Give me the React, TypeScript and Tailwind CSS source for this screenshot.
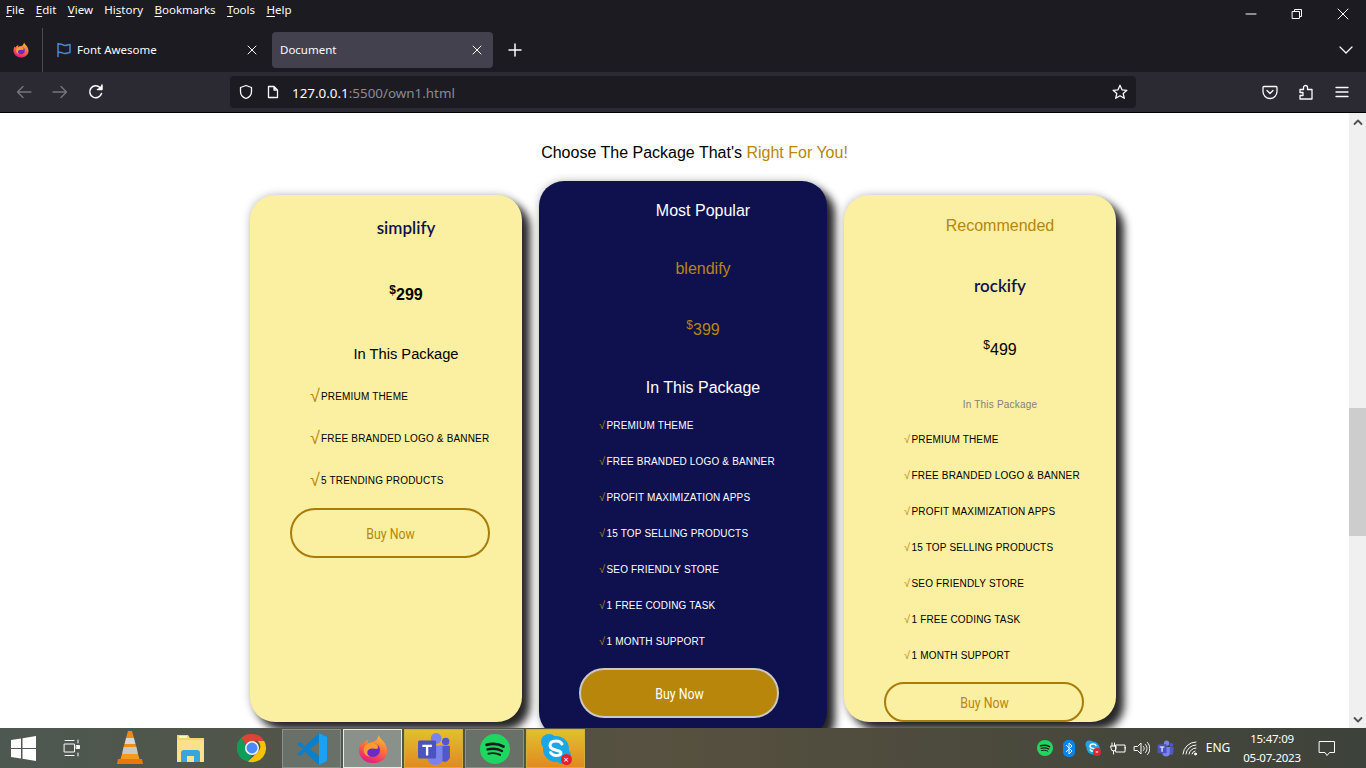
import React from "react";

const sans = "font-['Liberation_Sans',Arial,sans-serif]";
const ui = "font-['Noto_Sans','Open_Sans',sans-serif]";
const comic = "font-['Comic_Sans_MS','Lato','Noto_Sans',sans-serif]";
const narrow = "font-['Roboto',sans-serif]";

const Stroke = ({ s = 16, children, c = "#fbfbfe", w = 1.5, v = 16 }: { s?: number; children: React.ReactNode; c?: string; w?: number; v?: number }) => (
  <svg width={s} height={s} viewBox={`0 0 ${v} ${v}`} fill="none" stroke={c} strokeWidth={w} strokeLinecap="round" strokeLinejoin="round">
    {children}
  </svg>
);

const FirefoxIcon = ({ s = 16 }: { s?: number }) => (
  <svg width={s} height={s} viewBox="0 0 32 32">
    <defs>
      <linearGradient id={`ff${s}`} x1="0.7" y1="0" x2="0.3" y2="1">
        <stop offset="0" stopColor="#ffbd2e" />
        <stop offset="0.45" stopColor="#ff7139" />
        <stop offset="1" stopColor="#e31587" />
      </linearGradient>
    </defs>
    <path d="M22 1c1 3 4 5 6 8 2 3 3 6 3 9 0 8-7 13-15 13S1 25 1 17c0-3 1-6 2-8 .5 1 1 2 2 2 1-2 3-4 6-5-1 2-1 3 0 4 3-1 7-2 9-4 1-2 2-3 2-5z" fill={`url(#ff${s})`} />
    <circle cx="16" cy="17" r="7.5" fill="#6a2bc4" />
    <path d="M8 12c3-3 8-4 11-2 3 2 3 5 1 6-3-1-7-1-9 1-2 2-1 6 2 7-4 0-7-3-7-7 0-2 1-4 2-5z" fill="#ff9a30" />
  </svg>
);

const VsCode = () => (
  <svg width="32" height="34" viewBox="0 0 32 34">
    <path d="M23 1l8 4v24l-8 4L9 20l-5 4-3-2 6-5-6-5 3-2 5 4z" fill="#0a7fcb" />
    <path d="M23 1l8 4v24l-8 4z" fill="#1e9ff0" />
    <path d="M23 10l-9 7 9 7z" fill="#687068" />
  </svg>
);

const Teams = ({ s = 30 }: { s?: number }) => (
  <svg width={s} height={s} viewBox="0 0 32 32">
    <circle cx="18" cy="6" r="5" fill="#7b83eb" />
    <circle cx="27" cy="9" r="3.5" fill="#5059c9" />
    <path d="M22 13h9v10c0 3-3 5-5 5s-4-1-4-3z" fill="#5059c9" />
    <path d="M10 13h14v13c0 3-3 5-7 5s-7-3-7-6z" fill="#7b83eb" />
    <rect x="1" y="8" width="17" height="17" rx="1.5" fill="#4b53bc" />
    <path d="M5 12h9v2h-3.4v8H8.400v-8H5z" fill="#fff" />
  </svg>
);

const Spotify = ({ s = 30 }: { s?: number }) => (
  <svg width={s} height={s} viewBox="0 0 32 32">
    <circle cx="16" cy="16" r="16" fill="#1ed760" />
    <g fill="none" stroke="#1a1a1a" strokeLinecap="round">
      <path d="M7 11.500c6-1.500 13-1 18 1.800" strokeWidth="3" />
      <path d="M8 16.500c5-1.300 11-.8 15.500 1.600" strokeWidth="2.500" />
      <path d="M9 21c4.500-1 9-.6 12.500 1.300" strokeWidth="2" />
    </g>
  </svg>
);

const Skype = ({ s = 30, b = false }: { s?: number; b?: boolean }) => (
  <div className="relative" style={{ width: s, height: s }}>
    <svg width={s} height={s} viewBox="0 0 32 32">
      <circle cx="9" cy="9" r="8" fill="#19a7e6" />
      <circle cx="23" cy="23" r="8" fill="#19a7e6" />
      <circle cx="16" cy="16" r="13" fill="#19a7e6" />
      <path d="M22 11c-1-2-3-3-6-3-4 0-6 2-6 4.500 0 6 11 3.500 11 7.500 0 1.500-2 2.500-5 2.500-3 0-4.500-1.500-5.500-3" fill="none" stroke="#fff" strokeWidth="3" strokeLinecap="round" />
    </svg>
    <div className={`absolute bottom-0 right-0 flex items-center justify-center rounded-full bg-[#e3222e] text-white leading-none ${b ? "h-[8px] w-[8px] text-[6px]" : "h-[11px] w-[11px] text-[9px]"}`}>×</div>
  </div>
);

const Vlc = () => (
  <svg width="26" height="34" viewBox="0 0 26 34">
    <path d="M11 0h4l2 7H9z" fill="#f08a12" />
    <path d="M9 7h8l1.500 6h-11z" fill="#d7d7d7" />
    <path d="M7.500 13h11l1 3H6.500z" fill="#f28c14" />
    <path d="M6.500 16h13l1.500 7H5z" fill="#c9c9c9" />
    <path d="M5 23h16l1.500 5h-19z" fill="#f59a1c" />
    <path d="M1 28h24l1 5H0z" fill="#e9780c" />
  </svg>
);

const Folder = () => (
  <svg width="29" height="28" viewBox="0 0 29 28">
    <path d="M1 1h11l2 3h14v23a1 1 0 0 1-1 1H1z" fill="#f5d570" />
    <path d="M1 6h27v21a1 1 0 0 1-1 1H1z" fill="#fde08c" />
    <rect x="3" y="2" width="8" height="2" fill="#fff3c8" />
    <path d="M5 28v-9a3 3 0 0 1 3-3h13a3 3 0 0 1 3 3v9h-6v-6h-7v6z" fill="#3aa5dd" />
  </svg>
);

const Chrome = () => (
  <svg width="30" height="30" viewBox="0 0 32 32">
    <path d="M16 1a15 15 0 0 1 13 7.500H16a7.500 7.500 0 0 0-6.500 3.700L4 5.500A15 15 0 0 1 16 1z" fill="#db4437" />
    <path d="M4 5.500l5.500 6.700 6.500 11.300-4.500 7A15 15 0 0 1 4 5.500z" fill="#0f9d58" />
    <path d="M29 8.500A15 15 0 0 1 11.500 30.400L22.500 20a7.500 7.500 0 0 0-.500-11.500z" fill="#f4c20d" />
    <circle cx="16" cy="16" r="7.500" fill="#f1f1f1" />
    <circle cx="16" cy="16" r="5.800" fill="#4a8af4" />
  </svg>
);

const U = ({ children }: { children: React.ReactNode }) => <span className="underline underline-offset-2">{children}</span>;

const MenuBar = () => (
  <div className={`flex h-[20px] shrink-0 items-center justify-between bg-[#1c1b22] pl-[6px] text-[11.500px] text-[#fbfbfe] ${ui}`}>
    <div className="flex gap-[11.400px]">
      <span><U>F</U>ile</span>
      <span><U>E</U>dit</span>
      <span><U>V</U>iew</span>
      <span>Hi<U>s</U>tory</span>
      <span><U>B</U>ookmarks</span>
      <span><U>T</U>ools</span>
      <span><U>H</U>elp</span>
    </div>
    <div className="mt-[8px] flex">
      <div className="flex h-[14px] w-[46px] items-center justify-center">
        <Stroke s={12} v={12} w={1}><path d="M1 6h10" /></Stroke>
      </div>
      <div className="flex h-[14px] w-[46px] items-center justify-center">
        <Stroke s={12} v={12} w={1}><path d="M1.500 3.500h7v7h-7zM3.500 3.500v-2h7v7h-2" /></Stroke>
      </div>
      <div className="flex h-[14px] w-[46px] items-center justify-center">
        <Stroke s={12} v={12} w={1}><path d="M1 1l10 10M11 1L1 11" /></Stroke>
      </div>
    </div>
  </div>
);

const TabBar = () => (
  <div className={`flex h-[52px] shrink-0 items-center bg-[#1c1b22] pt-[8px] text-[11.500px] text-[#fbfbfe] ${ui}`}>
    <div className="flex h-[44px] w-[43px] items-center justify-center border-r border-[#4a4a52]">
      <FirefoxIcon />
    </div>
    <div className="flex h-[36px] w-[229px] items-center pl-[13px]">
      <Stroke s={16} c="#4a86d8" w={1.500}><path d="M2 1.500v13M2 2.500c4-1.500 4 1 7 1 2 0 3-1 5-1v8c-2 0-3 1-5 1-3 0-3-2-7-1" /></Stroke>
      <span className="ml-[5px]">Font Awesome</span>
      <span className="ml-[90px] flex"><Stroke s={10} v={10} w={1}><path d="M1 1l8 8M9 1L1 9" /></Stroke></span>
    </div>
    <div className="flex h-[36px] w-[221px] items-center rounded-[4px] bg-[#42414d] pl-[8px]">
      <span>Document</span>
      <span className="ml-[136px] flex"><Stroke s={10} v={10} w={1}><path d="M1 1l8 8M9 1L1 9" /></Stroke></span>
    </div>
    <div className="ml-[15px] flex">
      <Stroke s={14} v={14} w={1.500}><path d="M7 1v12M1 7h12" /></Stroke>
    </div>
    <div className="ml-auto mr-[13px] flex">
      <Stroke s={14} v={14} w={1.300}><path d="M1 4l6 6 6-6" /></Stroke>
    </div>
  </div>
);

const NavBar = () => (
  <div className={`flex h-[41px] shrink-0 items-start border-b border-black bg-[#2b2a33] text-[#fbfbfe] ${ui}`}>
    <div className="flex h-[40px] w-[230px] items-center pl-[16px]">
      <Stroke c="#77767d" w={1.300}><path d="M15 8H1.500M7 2.500L1.500 8 7 13.500" /></Stroke>
      <span className="ml-[20px] flex"><Stroke c="#77767d" w={1.300}><path d="M1 8h13.500M9 2.500L14.500 8 9 13.500" /></Stroke></span>
      <span className="ml-[20px] flex"><Stroke w={1.500}><path d="M13.500 9.500A6 6 0 1 1 12 3.500" /><path d="M14 1v4.500H9.500" fill="#fbfbfe" /></Stroke></span>
    </div>
    <div className="mt-[4px] flex h-[32px] w-[906px] items-center rounded-[4px] bg-[#1c1b22] pl-[8px]">
      <Stroke w={1.300}><path d="M8 1.500l5.500 2v4c0 3.500-2.500 6-5.500 7-3-1-5.500-3.500-5.500-7v-4z" /></Stroke>
      <span className="ml-[12px] flex"><Stroke w={1.300} s={14} v={14}><path d="M2.500 1.500h5.500l3.500 3.500v7.500h-9zM8 1.500v3.500h3.500" /></Stroke></span>
      <span className="relative top-[1px] ml-[12px] text-[13.400px]">127.0.0.1<span className="text-[#8b8b92]">:5500/own1.html</span></span>
      <span className="ml-auto mr-[8px] flex"><Stroke w={1.300}><path d="M8 1.300l2 4.500 4.900.5-3.700 3.200 1.100 4.800L8 11.800l-4.300 2.500 1.100-4.800L1.100 6.300 6 5.800z" /></Stroke></span>
    </div>
    <div className="flex h-[40px] flex-1 items-center pl-[126px]">
      <Stroke w={1.300}><path d="M2 2.500h12a1 1 0 0 1 1 1v4a7 7 0 0 1-14 0v-4a1 1 0 0 1 1-1zM5 6.500l3 3 3-3" /></Stroke>
      <span className="ml-[20px] flex"><Stroke w={1.300}><path d="M2 5.500h3.500V3.500a2 2 0 0 1 4 0v2h4.500v9.500H2v-3.500h3v-3H2z" /></Stroke></span>
      <span className="ml-[20px] flex"><Stroke w={1.300}><path d="M2 3.500h12M2 8h12M2 12.500h12" /></Stroke></span>
    </div>
  </div>
);

const Row = ({ t, h, big, dark }: { t: string; h: string; big?: boolean; dark?: boolean }) => (
  <li className={`flex items-center pl-[20px] text-[10px] tracking-[0.17px] ${h} ${dark ? "text-white" : "text-black"}`}>
    <span className={`text-[#b8860b] ${big ? "w-[11px] text-[18px]" : "w-[7.500px] text-[11px]"}`}>√</span>
    <span>{t}</span>
  </li>
);

const Sup = ({ children }: { children: React.ReactNode }) => <span className="relative top-[-6px] text-[12px]">{children}</span>;

const Buy = ({ className }: { className: string }) => (
  <div className={`flex w-[200px] items-center justify-center rounded-full border-2 ${narrow} ${className}`}>
    <span className="relative top-[2px] inline-block scale-x-[0.85] text-[14.500px]">Buy Now</span>
  </div>
);

const full = ["PREMIUM THEME", "FREE BRANDED LOGO & BANNER", "PROFIT MAXIMIZATION APPS", "15 TOP SELLING PRODUCTS", "SEO FRIENDLY STORE", "1 FREE CODING TASK", "1 MONTH SUPPORT"];

const glow = "shadow-[8px_8px_8px_#262626,0_0_9px_#bbb]";

const Cards = () => (
  <div className={`flex justify-center gap-[17px] pl-[17px] ${sans}`}>
    <div className={`mt-[14px] h-[527px] w-[272px] shrink-0 rounded-[25px] bg-[#fbefa1] pl-[40px] pt-[18px] ${glow}`}>
      <div className={`h-[30px] text-center text-[17px] font-semibold leading-[30px] text-[#0f114f] ${comic}`}>simplify</div>
      <div className="mt-[37px] h-[30px] text-center text-[16px] font-bold leading-[30px] text-black"><Sup>$</Sup>299</div>
      <div className="mt-[32px] h-[24px] text-center text-[14.700px] leading-[24px] text-black">In This Package</div>
      <ul className="mt-[9px]">
        {["PREMIUM THEME", "FREE BRANDED LOGO & BANNER", "5 TRENDING PRODUCTS"].map((t) => (
          <Row key={t} t={t} h="h-[42px]" big />
        ))}
      </ul>
      <Buy className="mt-[7px] h-[50px] border-[#a97c0a] text-[#b8860b]" />
    </div>
    <div className={`h-[556px] w-[288px] shrink-0 rounded-[25px] bg-[#0f114f] pl-[40px] pt-[15px] ${glow}`}>
      <div className="h-[30px] text-center text-[16px] leading-[30px] text-white">Most Popular</div>
      <div className="mt-[28px] h-[30px] text-center text-[16px] leading-[30px] text-[#b8860b]">blendify</div>
      <div className="mt-[31px] h-[30px] text-center text-[16px] leading-[30px] text-[#b8860b]"><Sup>$</Sup>399</div>
      <div className="mt-[31px] h-[24px] text-center text-[16px] leading-[24px] text-white">In This Package</div>
      <ul className="mt-[7px]">
        {full.map((t) => <Row key={t} t={t} h="h-[36px]" dark />)}
      </ul>
      <Buy className="mt-[9px] h-[50px] border-[#c9c9c9] bg-[#b8860b] text-white" />
    </div>
    <div className={`mt-[14px] h-[527px] w-[272px] shrink-0 rounded-[25px] bg-[#fbefa1] pl-[40px] pt-[16px] ${glow}`}>
      <div className="h-[30px] text-center text-[16px] leading-[30px] text-[#b8860b]">Recommended</div>
      <div className={`mt-[30px] h-[30px] text-center text-[17px] font-semibold leading-[30px] text-[#0f114f] ${comic}`}>rockify</div>
      <div className="mt-[34px] h-[30px] text-center text-[16px] leading-[30px] text-black"><Sup>$</Sup>499</div>
      <div className="mt-[32px] h-[16px] text-center text-[10px] leading-[16px] tracking-[0.2px] text-[#85807a]">In This Package</div>
      <ul className="mt-[8px]">
        {full.map((t) => <Row key={t} t={t} h="h-[36px]" />)}
      </ul>
      <Buy className="mt-[9px] h-[40px] border-[#a97c0a] text-[#b8860b]" />
    </div>
  </div>
);

const Scrollbar = () => (
  <div className="flex w-[17px] shrink-0 flex-col bg-[#f0f0f0]">
    <div className="flex h-[17px] items-center justify-center">
      <Stroke s={10} v={10} w={1.800} c="#505050"><path d="M1.500 7L5 3.500 8.500 7" /></Stroke>
    </div>
    <div className="mt-[278px] h-[128px] bg-[#cdcdcd]" />
    <div className="flex-1" />
    <div className="flex h-[17px] items-center justify-center">
      <Stroke s={10} v={10} w={1.800} c="#505050"><path d="M1.500 3L5 6.500 8.500 3" /></Stroke>
    </div>
  </div>
);

const TaskBtn = ({ children, hot, active }: { children: React.ReactNode; hot?: boolean; active?: boolean }) => (
  <div
    className={`flex h-[39px] w-[59px] items-center justify-center border ${active ? "border-[#e8ece8] bg-[#8a908a]" : hot ? "border-[#d0b040] bg-gradient-to-b from-[#e0c030] to-[#e08a20]" : "border-[#8a908a] bg-[#687068]"}`}
  >
    {children}
  </div>
);

const Taskbar = () => (
  <div className={`flex h-[40px] shrink-0 items-center bg-gradient-to-r from-[#4d5850] via-[#56503f] to-[#3d423a] text-white ${ui}`}>
    <div className="flex h-[40px] w-[46px] items-center justify-center">
      <svg width="25" height="25" viewBox="0 0 25 25" fill="#fff"><path d="M0 4l10-1.500V12H0zM11.500 2.300L25 0v12H11.500zM0 13h10v9.500L0 21zM11.500 13H25v12l-13.500-2.300z" /></svg>
    </div>
    <div className="mr-[3px] flex h-[40px] w-[50px] items-center justify-center">
      <Stroke s={18} v={18} w={1}><path d="M3 1.500h9M3 16.500h9M2.500 5h10v8h-10zM16 1v3M16 14v3" /><rect x="14.500" y="6.500" width="3" height="3" fill="#fff" /></Stroke>
    </div>
    <div className="flex h-[40px] w-[61px] items-center justify-center"><Vlc /></div>
    <div className="flex h-[40px] w-[61px] items-center justify-center"><Folder /></div>
    <div className="flex h-[40px] w-[61px] items-center justify-center"><Chrome /></div>
    <div className="flex items-end gap-[2px] self-end">
      <TaskBtn><VsCode /></TaskBtn>
      <TaskBtn active><FirefoxIcon s={30} /></TaskBtn>
      <TaskBtn hot><Teams s={34} /></TaskBtn>
      <TaskBtn><Spotify /></TaskBtn>
      <TaskBtn hot><Skype s={32} /></TaskBtn>
    </div>
    <div className="ml-auto flex h-[40px] items-center">
      <div className="flex w-[24px] justify-center"><Spotify s={16} /></div>
      <div className="flex w-[24px] justify-center">
        <svg width="12" height="17" viewBox="0 0 12 17"><rect width="12" height="17" rx="5" fill="#0a84e8" /><path d="M3 5l6 6-3 3V3l3 3-6 6" fill="none" stroke="#fff" strokeWidth="1" /></svg>
      </div>
      <div className="flex w-[24px] justify-center"><Skype s={16} b /></div>
      <div className="flex w-[24px] justify-center">
        <Stroke s={17} v={17} w={1}><path d="M7 5h9v7H7zM16 7.500h1v2M3 3v3M5.500 3v3M2 6h5v2.500a2.500 2.500 0 0 1-5 0zM4.500 11v3" /></Stroke>
      </div>
      <div className="flex w-[24px] justify-center">
        <Stroke s={17} v={17} w={1}><path d="M1.500 6.500h3L8 3v11l-3.500-3.500h-3zM10.500 6.500c1 1 1 3 0 4M12.500 4.500c2 2 2 6 0 8M14.500 2.500c3 3 3 9 0 12" /></Stroke>
      </div>
      <div className="flex w-[24px] justify-center"><Teams s={17} /></div>
      <div className="ml-[1px] flex w-[24px] justify-center">
        <Stroke s={16} v={16} w={1}><path d="M1 14A13 13 0 0 1 14 2M4 14A10 10 0 0 1 14 5M7 14a7 7 0 0 1 7-6M10 14a4 4 0 0 1 3-3" /><circle cx="13.500" cy="14" r="1" fill="#fff" /></Stroke>
      </div>
      <div className="w-[32px] text-center text-[12px]">ENG</div>
      <div className="ml-[2px] w-[72px] text-center text-[11.500px] leading-[19px] tracking-[-0.25px]">
        <div>15:47:09</div>
        <div>05-07-2023</div>
      </div>
      <div className="ml-[5px] mr-[25px] flex w-[28px] justify-center">
        <Stroke s={18} v={18} w={1}><path d="M1.500 2.500h15v11h-5l-2.500 3-2-3h-5.500z" /></Stroke>
      </div>
    </div>
  </div>
);

export default function App() {
  return (
    <div className="flex h-screen w-screen flex-col overflow-hidden bg-white">
      <MenuBar />
      <TabBar />
      <NavBar />
      <div className="flex min-h-0 flex-1">
        <div className="min-w-0 flex-1 overflow-hidden bg-white pt-[28px]">
          <div className={`flex h-[24px] justify-center pl-[40px] text-[16px] leading-[24px] text-black ${sans}`}>
            <div>Choose The Package That's <span className="text-[#b8860b]">Right For You!</span></div>
          </div>
          <div className="mt-[16px]"><Cards /></div>
        </div>
        <Scrollbar />
      </div>
      <Taskbar />
    </div>
  );
}
